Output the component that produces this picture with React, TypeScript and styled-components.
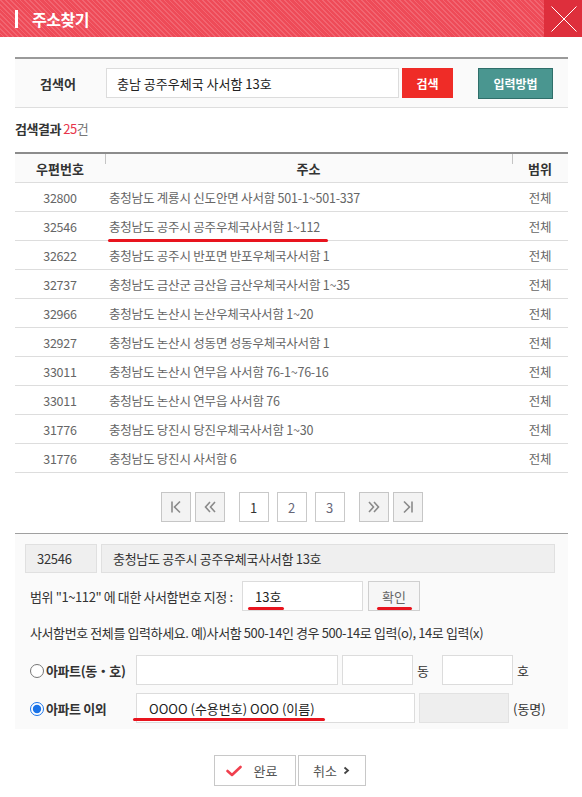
import styled, { createGlobalStyle } from "styled-components";

const GlobalStyle = createGlobalStyle`
  html, body {
    margin: 0;
    padding: 0;
    background: #fff;
  }
  body {
    font-family: "Noto Sans CJK KR", "Noto Sans", sans-serif;
    font-size: 13px;
    color: #333;
  }
  * {
    box-sizing: border-box;
  }
`;

const rows = [
  { zip: "32800", addr: "충청남도 계룡시 신도안면 사서함 501-1~501-337" },
  { zip: "32546", addr: "충청남도 공주시 공주우체국사서함 1~112", marked: true },
  { zip: "32622", addr: "충청남도 공주시 반포면 반포우체국사서함 1" },
  { zip: "32737", addr: "충청남도 금산군 금산읍 금산우체국사서함 1~35" },
  { zip: "32966", addr: "충청남도 논산시 논산우체국사서함 1~20" },
  { zip: "32927", addr: "충청남도 논산시 성동면 성동우체국사서함 1" },
  { zip: "33011", addr: "충청남도 논산시 연무읍 사서함 76-1~76-16" },
  { zip: "33011", addr: "충청남도 논산시 연무읍 사서함 76" },
  { zip: "31776", addr: "충청남도 당진시 당진우체국사서함 1~30" },
  { zip: "31776", addr: "충청남도 당진시 사서함 6" },
];

function PagerIcon({ kind }: { kind: "first" | "prev" | "next" | "last" }) {
  const stroke = { stroke: "#8a8a8a", strokeWidth: 1.6, fill: "none" };
  return (
    <svg width="16" height="16" viewBox="0 0 16 16">
      {kind === "first" && (
        <>
          <line x1="4" y1="2.5" x2="4" y2="13.5" {...stroke} />
          <polyline points="12,2.5 6.5,8 12,13.5" {...stroke} />
        </>
      )}
      {kind === "prev" && (
        <>
          <polyline points="8,3 3.5,8 8,13" {...stroke} />
          <polyline points="13,3 8.5,8 13,13" {...stroke} />
        </>
      )}
      {kind === "next" && (
        <>
          <polyline points="3,3 7.5,8 3,13" {...stroke} />
          <polyline points="8,3 12.5,8 8,13" {...stroke} />
        </>
      )}
      {kind === "last" && (
        <>
          <polyline points="4,2.5 9.5,8 4,13.5" {...stroke} />
          <line x1="12" y1="2.5" x2="12" y2="13.5" {...stroke} />
        </>
      )}
    </svg>
  );
}

export default function App() {
  return (
    <>
      <GlobalStyle />
      <Popup>
        <TitleBar>
          <Title>주소찾기</Title>
          <CloseBtn aria-label="닫기">
            <svg width="26" height="26" viewBox="0 0 26 26">
              <line x1="0.5" y1="0.5" x2="25.5" y2="25.5" stroke="#fff" strokeWidth="1" />
              <line x1="25.5" y1="0.5" x2="0.5" y2="25.5" stroke="#fff" strokeWidth="1" />
            </svg>
          </CloseBtn>
        </TitleBar>

        <Content>
          <SearchBox>
            <SearchLabel>검색어</SearchLabel>
            <SearchInput defaultValue="충남 공주우체국 사서함 13호" />
            <SearchBtn>검색</SearchBtn>
            <GuideBtn>입력방법</GuideBtn>
          </SearchBox>

          <ResultCount>
            검색결과 <Count>25</Count>
            <Unit>건</Unit>
          </ResultCount>

          <Table>
            <HeadRow>
              <HeadCell>우편번호</HeadCell>
              <HeadCell $divider>주소</HeadCell>
              <HeadCell $divider>범위</HeadCell>
            </HeadRow>
            {rows.map((r, i) => (
              <Row key={i}>
                <Cell $align="center">{r.zip}</Cell>
                <Cell>
                  <AddrText>
                    {r.addr}
                    {r.marked && <Mark style={{ left: -1, right: -8, bottom: -6 }} />}
                  </AddrText>
                </Cell>
                <Cell $align="center">전체</Cell>
              </Row>
            ))}
          </Table>

          <Pager>
            <PageGroup>
              <NavBtn>
                <PagerIcon kind="first" />
              </NavBtn>
              <NavBtn>
                <PagerIcon kind="prev" />
              </NavBtn>
            </PageGroup>
            <PageGroup $gap={8}>
              <PageBtn $current>1</PageBtn>
              <PageBtn>2</PageBtn>
              <PageBtn>3</PageBtn>
            </PageGroup>
            <PageGroup>
              <NavBtn>
                <PagerIcon kind="next" />
              </NavBtn>
              <NavBtn>
                <PagerIcon kind="last" />
              </NavBtn>
            </PageGroup>
          </Pager>

          <DetailBox>
            <Selected>
              <ReadBox $width={72}>32546</ReadBox>
              <ReadBox $grow>충청남도 공주시 공주우체국사서함 13호</ReadBox>
            </Selected>

            <RangeRow>
              <RangeLabel>범위 "1~112" 에 대한 사서함번호 지정 :</RangeLabel>
              <FieldWrap>
                <Field $width={121} defaultValue="13호" />
                <Mark style={{ left: 6, width: 36, bottom: 1 }} />
              </FieldWrap>
              <FieldWrap>
                <ConfirmBtn>확인</ConfirmBtn>
                <Mark style={{ left: 9, width: 35, bottom: 1 }} />
              </FieldWrap>
            </RangeRow>

            <Notice>
              사서함번호 전체를 입력하세요. 예)사서함 500-14인 경우 500-14로 입력(o), 14로 입력(x)
            </Notice>

            <AptRow>
              <RadioLabel>
                <Radio type="radio" name="apt" />
                아파트(동・호)
              </RadioLabel>
              <Field $width={202} />
              <Field $width={71} />
              <Suffix $width={21}>동</Suffix>
              <Field $width={71} />
              <Suffix>호</Suffix>
            </AptRow>

            <AptRow>
              <RadioLabel>
                <Radio type="radio" name="apt" defaultChecked />
                아파트 이외
              </RadioLabel>
              <FieldWrap>
                <Field $width={279} $pad={12} defaultValue="OOOO (수용번호) OOO (이름)" />
                <Mark style={{ left: -3, width: 192, bottom: 2 }} />
              </FieldWrap>
              <Disabled />
              <Suffix>(동명)</Suffix>
            </AptRow>
          </DetailBox>

          <Actions>
            <ActionBtn $width={82}>
              <svg width="16" height="12" viewBox="0 0 16 12">
                <polyline
                  points="1.5,6 6,10 14.5,2"
                  fill="none"
                  stroke="#f0404e"
                  strokeWidth="2.6"
                  strokeLinecap="round"
                  strokeLinejoin="round"
                />
              </svg>
              완료
            </ActionBtn>
            <ActionBtn $width={68}>
              취소
              <svg width="7" height="9" viewBox="0 0 7 9">
                <polyline points="1.5,1.5 5,4.5 1.5,7.5" fill="none" stroke="#444" strokeWidth="1.8" />
              </svg>
            </ActionBtn>
          </Actions>
        </Content>
      </Popup>
    </>
  );
}

const Popup = styled.div`
  width: 582px;
  min-height: 797px;
  background: #fff;
`;

const TitleBar = styled.div`
  display: flex;
  align-items: center;
  height: 37px;
  background: repeating-linear-gradient(
    45deg,
    #ee4b58 0px,
    #ee4b58 2.2px,
    #f26571 2.2px,
    #f26571 3.4px
  );
`;

const Title = styled.h1`
  flex: 1;
  display: flex;
  align-items: center;
  margin: 0;
  padding-left: 15px;
  font-size: 16px;
  font-weight: bold;
  color: #fff;
  letter-spacing: -0.5px;

  &::before {
    content: "";
    width: 3px;
    height: 18px;
    margin-right: 14px;
    background: #fff;
  }
`;

const CloseBtn = styled.button`
  display: flex;
  align-items: center;
  justify-content: center;
  width: 38px;
  height: 37px;
  padding: 0 0 0 2px;
  border: none;
  background: #de2f3c;
`;

const Content = styled.div`
  padding: 0 14px 0 15px;
`;

const SearchBox = styled.div`
  display: flex;
  align-items: center;
  height: 51px;
  margin-top: 20px;
  padding-left: 25px;
  background: #fafafa;
  border-top: 2px solid #9a9a9a;
  border-bottom: 1px solid #dedede;
`;

const SearchLabel = styled.span`
  width: 66px;
  font-weight: bold;
  color: #333;
`;

const SearchInput = styled.input`
  width: 293px;
  height: 30px;
  padding: 0 10px;
  border: 1px solid #dcdcdc;
  background: #fff;
  font-family: inherit;
  font-size: 13px;
  color: #222;
  outline: none;
`;

const SearchBtn = styled.button`
  width: 51px;
  height: 30px;
  margin-left: 3px;
  border: none;
  background: #ef2c27;
  color: #fff;
  font-family: inherit;
  font-size: 12px;
  font-weight: bold;
`;

const GuideBtn = styled.button`
  width: 75px;
  height: 31px;
  margin-left: 25px;
  border: 1px solid #2f6f6a;
  background: #4a9690;
  color: #fff;
  font-family: inherit;
  font-size: 12px;
  font-weight: bold;
`;

const ResultCount = styled.div`
  height: 44px;
  padding-top: 11px;
  font-size: 13px;
  font-weight: bold;
  color: #333;
  letter-spacing: -0.5px;
`;

const Count = styled.span`
  font-weight: normal;
  color: #e8344a;
`;

const Unit = styled.span`
  font-weight: normal;
  color: #777;
`;

const Table = styled.div`
  border-top: 2px solid #8c8c8c;
`;

const HeadRow = styled.div`
  display: grid;
  grid-template-columns: 90px 1fr 56px;
  height: 29px;
  background: #fafafa;
  border-bottom: 1px solid #dddddd;
`;

const HeadCell = styled.div<{ $divider?: boolean }>`
  position: relative;
  display: flex;
  align-items: center;
  justify-content: center;
  font-size: 13px;
  font-weight: bold;
  color: #333;

  &::before {
    content: "";
    display: ${(p) => (p.$divider ? "block" : "none")};
    position: absolute;
    left: 0;
    top: 0;
    width: 1px;
    height: 10px;
    background: #c4c4c4;
  }
`;

const Row = styled.div`
  display: grid;
  grid-template-columns: 90px 1fr 56px;
  height: 29px;
  border-bottom: 1px solid #dddddd;
`;

const Cell = styled.div<{ $align?: "left" | "center" }>`
  display: flex;
  align-items: center;
  justify-content: ${(p) => (p.$align === "center" ? "center" : "flex-start")};
  padding-left: ${(p) => (p.$align === "center" ? "0" : "4px")};
  font-size: 12.5px;
  color: #666;
  letter-spacing: -0.2px;
`;

const AddrText = styled.span`
  position: relative;
`;

const Mark = styled.span`
  position: absolute;
  height: 3px;
  border-radius: 2px;
  background: #e8141e;
`;

const Pager = styled.div`
  display: flex;
  justify-content: center;
  gap: 14px;
  margin-top: 19px;
`;

const PageGroup = styled.div<{ $gap?: number }>`
  display: flex;
  gap: ${(p) => p.$gap ?? 4}px;
`;

const NavBtn = styled.button`
  display: flex;
  align-items: center;
  justify-content: center;
  width: 30px;
  height: 30px;
  padding: 0;
  border: 1px solid #c6c6c6;
  background: #f3f3f3;
`;

const PageBtn = styled.button<{ $current?: boolean }>`
  width: 30px;
  height: 30px;
  padding: 0;
  border: 1px solid #c9c9c9;
  background: #fff;
  font-family: inherit;
  font-size: 13px;
  color: ${(p) => (p.$current ? "#333" : "#667")};
`;

const DetailBox = styled.div`
  margin-top: 11px;
  padding: 10px 13px 6px 10px;
  background: #fafafa;
  border-top: 1px solid #a0a0a0;
`;

const Selected = styled.div`
  display: flex;
  gap: 4px;
`;

const ReadBox = styled.div<{ $width?: number; $grow?: boolean }>`
  display: flex;
  align-items: center;
  ${(p) => (p.$width ? `width: ${p.$width}px;` : "")}
  ${(p) => (p.$grow ? "flex: 1;" : "")}
  height: 29px;
  padding-left: 11px;
  background: #efefef;
  border: 1px solid #e0e0e0;
  font-size: 13px;
  color: #333;
  letter-spacing: -0.3px;
`;

const RangeRow = styled.div`
  display: flex;
  align-items: center;
  gap: 5px;
  margin-top: 8px;
  padding-left: 5px;
`;

const RangeLabel = styled.span`
  width: 207px;
  font-size: 13px;
  color: #333;
  letter-spacing: -0.4px;
  white-space: nowrap;
`;

const FieldWrap = styled.div`
  position: relative;
  display: flex;
`;

const Field = styled.input<{ $width: number; $pad?: number }>`
  width: ${(p) => p.$width}px;
  height: 30px;
  padding: 0 0 0 ${(p) => p.$pad ?? 12}px;
  border: 1px solid #dcdcdc;
  background: #fff;
  font-family: inherit;
  font-size: 13px;
  color: #222;
  outline: none;
`;

const ConfirmBtn = styled.button`
  width: 52px;
  height: 30px;
  padding: 0;
  border: 1px solid #cfcfcf;
  background: #f6f6f6;
  font-family: inherit;
  font-size: 13px;
  color: #666;
`;

const Notice = styled.p`
  margin: 12px 0 0 5px;
  font-size: 13px;
  color: #333;
  letter-spacing: -0.4px;
  white-space: nowrap;
`;

const AptRow = styled.div`
  display: flex;
  align-items: center;
  gap: 4px;
  margin-top: 13px;

  & + & {
    margin-top: 8px;
  }
`;

const RadioLabel = styled.label`
  display: flex;
  align-items: center;
  gap: 2px;
  width: 107px;
  padding-left: 5px;
  font-size: 13px;
  font-weight: bold;
  color: #333;
  letter-spacing: -0.4px;
  white-space: nowrap;
`;

const Radio = styled.input`
  width: 14px;
  height: 14px;
  margin: 2px 0 0 0;
  accent-color: #1a73e8;
`;

const Suffix = styled.span<{ $width?: number }>`
  ${(p) => (p.$width ? `width: ${p.$width}px;` : "")}
  font-size: 13px;
  color: #333;
`;

const Disabled = styled.div`
  width: 90px;
  height: 30px;
  background: #eeeeee;
  border: 1px solid #e2e2e2;
`;

const Actions = styled.div`
  display: flex;
  justify-content: center;
  gap: 2px;
  margin-top: 26px;
  padding-right: 4px;
`;

const ActionBtn = styled.button<{ $width: number }>`
  display: flex;
  align-items: center;
  justify-content: center;
  gap: 12px;
  width: ${(p) => p.$width}px;
  height: 31px;
  padding: 0;
  border: 1px solid #c8c8c8;
  background: #fff;
  font-family: inherit;
  font-size: 13px;
  color: #555;

  & > svg:last-child {
    margin-left: -6px;
  }
`;
